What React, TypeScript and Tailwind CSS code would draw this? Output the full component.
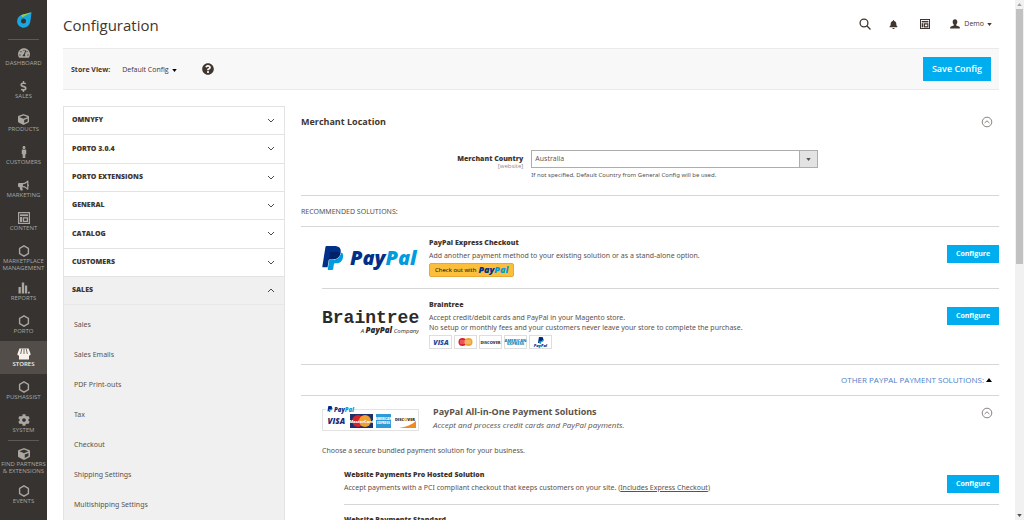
import { ReactNode } from "react";
import { FaBell, FaBullhorn, FaCog, FaCube, FaDollarSign, FaMale, FaQuestionCircle, FaTachometerAlt } from "react-icons/fa";

const HexIcon = () => (
  <svg viewBox="0 0 12 12" className="h-3 w-3" fill="none" stroke="currentColor" strokeWidth="1.4">
    <path d="M6 .9 10.4 3.4v5.2L6 11.1 1.6 8.6V3.4z" />
  </svg>
);

const LayoutIcon = ({ className = "h-3 w-3" }: { className?: string }) => (
  <svg viewBox="0 0 12 12" className={className} fill="none" stroke="currentColor">
    <rect x=".6" y=".6" width="10.8" height="10.8" strokeWidth="1.2" />
    <path d="M2 3.2h8" strokeWidth="1.8" />
    <path d="M3 5v5" strokeWidth="2" />
    <path d="M5.4 5.900h4v3.500h-4z" strokeWidth="1.4" />
  </svg>
);

const BarsIcon = () => (
  <svg viewBox="0 0 12 12" className="h-3 w-3" fill="currentColor">
    <path d="M.5 5h2.3v6.5H.5zM3.8.5h2.4v11H3.8zM7 3.5h2.2v8H7zM10 9.8h1.8v1.7H10z" />
  </svg>
);

const StoreIcon = () => (
  <svg viewBox="0 0 14 12" className="h-3 w-3.5" fill="currentColor">
    <path d="M2.4.5h9.2L13.6 6c0 1-.8 1.600-1.600 1.600V11.500H2V7.600C1.200 7.600.4 7 .4 6z" />
    <path d="M4.700 1 3.700 6M7 1v5M9.300 1l1 5" stroke="#524d49" strokeWidth=".8" />
  </svg>
);

const UserIcon = () => (
  <svg viewBox="0 0 12 12" className="h-2.5 w-2.5" fill="currentColor">
    <path d="M6 .3c1.800 0 2.800 1.200 2.800 3 0 1.500-.6 2.700-1.300 3.400v1l3.400 1.200c.6.2.9.7.9 1.300v1.300H.2v-1.300c0-.6.3-1.100.9-1.300l3.400-1.200v-1C3.800 6 3.200 4.800 3.200 3.300c0-1.800 1-3 2.800-3z" />
  </svg>
);

const Caret = ({ up = false }: { up?: boolean }) => (
  <svg viewBox="0 0 6 4" className={up ? "h-1 w-1.5 rotate-180" : "h-[3px] w-[5px]"} fill="currentColor">
    <path d="M0 0h6L3 4z" />
  </svg>
);

const Chevron = ({ up = false }: { up?: boolean }) => (
  <svg viewBox="0 0 8 5" className={`h-[5px] w-2 ${up ? "rotate-180" : ""}`} fill="none" stroke="currentColor" strokeWidth=".9">
    <path d="M1 1l3 3 3-3" />
  </svg>
);

const CollapseIcon = () => (
  <svg viewBox="0 0 12 12" className="h-3 w-3 text-[#7a746f]" fill="none" stroke="currentColor">
    <circle cx="6" cy="6" r="4.800" strokeWidth=".9" />
    <path d="M3.600 7 6 4.800 8.400 7" strokeWidth=".9" />
  </svg>
);

interface NavItem {
  label: string;
  icon: ReactNode;
  active?: boolean;
  divided?: boolean;
}

const navItems: NavItem[] = [
  { label: "Dashboard", icon: <FaTachometerAlt size={12} /> },
  { label: "Sales", icon: <FaDollarSign size={11} /> },
  { label: "Products", icon: <FaCube size={11} /> },
  { label: "Customers", icon: <FaMale size={12} /> },
  { label: "Marketing", icon: <FaBullhorn size={11} /> },
  { label: "Content", icon: <LayoutIcon /> },
  { label: "Marketplace Management", icon: <HexIcon /> },
  { label: "Reports", icon: <BarsIcon /> },
  { label: "Porto", icon: <HexIcon /> },
  { label: "Stores", icon: <StoreIcon />, active: true },
  { label: "Pushassist", icon: <HexIcon /> },
  { label: "System", icon: <FaCog size={12} /> },
  { label: "Find Partners & Extensions", icon: <FaCube size={12} />, divided: true },
  { label: "Events", icon: <HexIcon /> },
];

const configTabs = ["Omnyfy", "Porto 3.0.4", "Porto Extensions", "General", "Catalog", "Customers"];
const salesPages = ["Sales", "Sales Emails", "PDF Print-outs", "Tax", "Checkout", "Shipping Settings", "Multishipping Settings"];

function Sidebar() {
  return (
    <nav className="w-[47px] shrink-0 bg-[#373330] text-[#aaa6a0]">
      <a href="#" aria-label="Home" className="flex h-[39px] items-center justify-center">
        <svg viewBox="0 0 16 16" className="h-4 w-4">
          <path d="M15.500.3C15 4 15 7.500 14 10.500a6.500 6.500 0 1 1-9-7.200C8.500 1.800 12 1.500 15.500.3z" fill="#1ba6e0" />
          <path d="M15.500.3C12 1.500 8 1.800 4.800 3.400L6.600 5.200C9.500 3.400 12.500 2.500 15.500.3z" fill="#8fd14a" />
          <circle cx="7.500" cy="9" r="2.500" fill="#373330" />
        </svg>
      </a>
      <div className="mx-2 border-t border-[#5d5955]" />
      {navItems.map((item) => (
        <div key={item.label}>
          {item.divided && <div className="mx-2 border-t border-[#5d5955]" />}
          <a
            href="#"
            className={`flex min-h-[33px] flex-col items-center pt-[7px] pb-[3px] ${item.active ? "bg-[#524d49] font-semibold text-[#f7f3eb]" : ""}`}
          >
            <span className="flex h-3 items-center">{item.icon}</span>
            <span className="mt-px text-center text-[6px] leading-[7px] uppercase">{item.label}</span>
          </a>
        </div>
      ))}
    </nav>
  );
}

function Header() {
  return (
    <header className="flex h-12 items-center justify-between pr-[7px]">
      <h1 className="pt-0.5 text-[15px]">Configuration</h1>
      <div className="flex items-center text-[#41362f]">
        <button aria-label="Search" className="mr-[18px]">
          <svg viewBox="0 0 12 12" className="h-3 w-3" fill="none" stroke="currentColor" strokeWidth="1.300">
            <circle cx="5" cy="5" r="3.900" />
            <path d="M7.800 7.800l3.700 3.700" />
          </svg>
        </button>
        <button aria-label="Notifications" className="mr-[22px]">
          <FaBell size={9} />
        </button>
        <button aria-label="Dashboard layout" className="mr-5">
          <LayoutIcon className="h-2.5 w-2.5" />
        </button>
        <button className="flex items-center text-[7px]">
          <UserIcon />
          <span className="mr-[3px] ml-1">Demo</span>
          <Caret />
        </button>
      </div>
    </header>
  );
}

function Toolbar() {
  return (
    <div className="flex h-[42px] items-center border-y border-[#eaeaea] bg-[#f8f8f8] px-2">
      <label htmlFor="store" className="pt-0.5 text-[7px] font-bold">Store View:</label>
      <div className="ml-3 flex items-center pt-0.5">
        <select id="store" className="field-sizing-content appearance-none bg-transparent text-[7px]">
          <option>Default Config</option>
        </select>
        <span className="pointer-events-none ml-[3px] text-black"><Caret /></span>
      </div>
      <button aria-label="Help" className="ml-[25px] text-[#41362f]">
        <FaQuestionCircle size={12} />
      </button>
      <button className="ml-auto h-6 w-[68px] bg-[#00aeef] text-[9px] font-semibold text-white">Save Config</button>
    </div>
  );
}

function ConfigTabs() {
  return (
    <div className="w-[222px] shrink-0 self-start border border-[#e3e3e3]">
      <div className="grid h-[170px] grid-rows-6">
        {configTabs.map((tab) => (
          <button key={tab} className="flex items-center justify-between border-b border-[#e3e3e3] pr-[9px] pl-2 text-[7px] font-extrabold uppercase">
            {tab}
            <Chevron />
          </button>
        ))}
      </div>
      <div className="bg-[#f0f0f0]">
        <button className="flex h-7 w-full items-center justify-between border-b border-[#e8e8e8] pr-[9px] pl-2 text-[7px] font-extrabold uppercase">
          Sales
          <Chevron up />
        </button>
        <ul className="pt-[5px]">
          {salesPages.map((page) => (
            <li key={page}>
              <a href="#" className="flex h-[30px] items-center pl-2.5 font-['Noto_Sans',sans-serif] text-[7px] text-[#5a524c]">{page}</a>
            </li>
          ))}
        </ul>
      </div>
    </div>
  );
}

function ConfigureButton() {
  return <button className="h-[18px] w-[52px] shrink-0 bg-[#00aeef] text-[7px] font-bold text-white">Configure</button>;
}

// The two-tone double "P", drawn in a 24x24 box
const PayPalMark = () => (
  <>
    <path fill="#009cde" d="M21.222 6.917a3.350 3.350 0 0 0-.607-.541c-.93 5-4 7.455-9.179 7.455h-2.190a.563.563 0 0 0-.556.479l-1.433 9.043a.56.56 0 0 0 .554.647h3.882c.46 0 .85-.334.922-.788l.816-5.090a.932.932 0 0 1 .923-.788h.58c3.760 0 6.705-1.528 7.565-5.946.36-1.847.174-3.388-.777-4.471z" />
    <path fill="#003087" d="M7.076 21.337H2.470a.641.641 0 0 1-.633-.74L4.944.901C5.026.382 5.474 0 5.998 0h7.460c2.570 0 4.578.543 5.690 1.810 1.010 1.150 1.304 2.420 1.012 4.287-.98 5.500-4.400 7.234-8.724 7.234h-2.190c-.524 0-.968.382-1.050.9z" />
    <path fill="#012169" d="M9.300 6.800c.1-.5.500-.9 1-.9h6c1.600 0 2.900.2 3.800.7-1 5-4.400 6.750-8.660 6.750h-2.190c-.5 0-.9.350-1.050.9z" />
  </>
);

const PayPalLogo = () => (
  <svg viewBox="0 0 97 26" className="h-[26px] w-[97px]" role="img">
    <g transform="translate(-1.500 1)"><PayPalMark /></g>
    <text x="28" y="20" fontFamily="Open Sans" fontSize="20" fontWeight="800" fontStyle="italic" fill="#003087">
      Pay<tspan fill="#009cde">Pal</tspan>
    </text>
  </svg>
);

const BraintreeLogo = () => (
  <svg viewBox="0 0 97 28" className="h-7 w-[97px]" role="img" fill="#2b2b2b">
    <text x="0" y="16" fontFamily="Liberation Mono" fontSize="18" fontWeight="700">Braintree</text>
    <text x="97" y="26" textAnchor="end" fontFamily="Open Sans" fontStyle="italic" fontSize="6">
      A <tspan fontWeight="800" fontSize="8">PayPal</tspan> Company
    </text>
  </svg>
);

const BraintreeCards = () => (
  <svg viewBox="0 0 124 15" className="h-[15px] w-[124px]" role="img" fontFamily="Open Sans" fontWeight="800" textAnchor="middle">
    {[0, 25, 50, 75, 100].map((x) => (
      <rect key={x} x={x + 0.5} y=".5" width="22" height="13" fill="#fff" stroke="#dedede" />
    ))}
    <text x="12" y="9.500" fontSize="7" fontStyle="italic" fill="#1a4a9c">VISA</text>
    <circle cx="33.500" cy="7" r="4" fill="#d9222a" />
    <circle cx="39.500" cy="7" r="4" fill="#f0a02c" />
    <path d="M31 6h11M31 8h11" stroke="#fff" strokeWidth=".5" />
    <text x="61.500" y="8.500" fontSize="4" fill="#3c3c3c">DISCOVER</text>
    <text x="86.500" y="6.500" fontSize="4" fill="#1485b8">AMERICAN</text>
    <text x="86.500" y="10" fontSize="4" fill="#1485b8">EXPRESS</text>
    <g transform="translate(108.500 2) scale(.28)"><PayPalMark /></g>
    <text x="111.500" y="12" fontSize="4" fontStyle="italic" fill="#003087">PayPal</text>
  </svg>
);

const AllInOneLogo = () => (
  <svg viewBox="0 0 97 26" className="h-[26px] w-[97px]" role="img" fontFamily="Open Sans" fontWeight="800">
    <rect x=".5" y="4.500" width="96" height="21" fill="#fff" stroke="#e2e2e2" />
    <rect x="4" y="0" width="28" height="8" fill="#fff" />
    <g transform="translate(5 1) scale(.25)"><PayPalMark /></g>
    <text x="12" y="6.500" fontSize="6" fontStyle="italic" fill="#003087">Pay<tspan fill="#009cde">Pal</tspan></text>
    <text x="5.500" y="19" fontSize="8" fontStyle="italic" fill="#1a2a70">VISA</text>
    <rect x="28" y="9" width="23" height="14" fill="#1d2f6f" />
    <circle cx="36" cy="16" r="6" fill="#d9222a" />
    <circle cx="43" cy="16" r="6" fill="#f0a02c" />
    <text x="39.500" y="17.500" fontSize="4" textAnchor="middle" fill="#fff">MasterCard</text>
    <rect x="54" y="9" width="15" height="14" fill="#2f9bd6" />
    <text x="61.500" y="15" fontSize="3" textAnchor="middle" fill="#fff">AMERICAN</text>
    <text x="61.500" y="19" fontSize="3" textAnchor="middle" fill="#fff">EXPRESS</text>
    <path d="M94 16v7H77c7-1 13-3.500 17-7z" fill="#f08a24" />
    <text x="83" y="15.500" fontSize="4" textAnchor="middle" fill="#2b2b2b">DISC<tspan fill="#f08a24">O</tspan>VER</text>
  </svg>
);

interface SolutionProps {
  logo: ReactNode;
  title: string;
  children: ReactNode;
}

function Solution({ logo, title, children }: SolutionProps) {
  return (
    <div className="flex items-start">
      <div className="mr-2.5 pt-[7px]">{logo}</div>
      <div className="flex-1 font-['Noto_Sans',sans-serif] leading-[10px]">
        <h3 className="mb-[3px] font-['Open_Sans',sans-serif] font-extrabold text-[#41362f]">{title}</h3>
        {children}
      </div>
      <div className="pt-[7px]"><ConfigureButton /></div>
    </div>
  );
}

function PaymentSettings() {
  return (
    <section className="min-w-0 flex-1 text-[7px] text-[#5a524c]">
      <div className="flex h-8 items-center justify-between pr-1.5">
        <h2 className="text-[9px] font-bold text-[#41362f]">Merchant Location</h2>
        <button aria-label="Collapse merchant location"><CollapseIcon /></button>
      </div>

      <div className="flex h-[58px] items-start border-b border-[#d6d6d6] pt-3">
        <label htmlFor="country" className="w-[33%] shrink-0 pt-1 pr-2 text-right leading-[9px] font-extrabold text-[#41362f]">
          Merchant Country
          <span className="block text-[6px] leading-[7px] font-normal text-[#8a8a8a]">[website]</span>
        </label>
        <div className="w-[41%]">
          <div className="relative">
            <select id="country" className="block h-[18px] w-full appearance-none border border-[#adadad] bg-white pl-[3px]">
              <option>Australia</option>
            </select>
            <span className="pointer-events-none absolute inset-y-0 right-0 flex w-[19px] items-center justify-center border border-[#adadad] bg-[#e3e3e3]">
              <Caret />
            </span>
          </div>
          <p className="pt-0.5 font-['Noto_Sans',sans-serif] text-[6px] leading-[10px]">If not specified, Default Country from General Config will be used.</p>
        </div>
      </div>

      <div className="flex h-[31px] items-center border-b border-[#d6d6d6] pt-0.5 font-['Noto_Sans',sans-serif] uppercase">Recommended Solutions:</div>

      <div className="pl-[21px]">
        <div className="h-[62px] border-b border-[#d6d6d6] pt-[11px]">
          <Solution logo={<PayPalLogo />} title="PayPal Express Checkout">
            <p>Add another payment method to your existing solution or as a stand-alone option.</p>
            <button className="mt-0.5 flex h-3.5 items-center rounded-xs border border-[#e8a838] bg-[#fdbf3b] px-[5px] font-['Open_Sans',sans-serif]">
              <span className="mr-0.5 text-[6px] text-black">Check out with</span>
              <span className="text-[9px] font-extrabold text-[#003087] italic">Pay<span className="text-[#009cde]">Pal</span></span>
            </button>
          </Solution>
        </div>
        <div className="h-[75px] pt-[11px]">
          <Solution logo={<BraintreeLogo />} title="Braintree">
            <p>Accept credit/debit cards and PayPal in your Magento store.</p>
            <p>No setup or monthly fees and your customers never leave your store to complete the purchase.</p>
            <div className="mt-0.5"><BraintreeCards /></div>
          </Solution>
        </div>
      </div>

      <div className="flex h-8 items-center justify-end border-y border-[#d6d6d6] pr-[7px]">
        <a href="#" className="flex items-center text-[8px] text-[#4a7fc9] uppercase">
          Other PayPal Payment Solutions:
          <span className="ml-0.5 text-black"><Caret up /></span>
        </a>
      </div>

      <div className="pl-[21px]">
        <div className="flex items-start pt-[9px] pr-1.5">
          <AllInOneLogo />
          <div className="ml-3.5 flex-1">
            <h2 className="text-[9px] leading-3.5 font-bold">PayPal All-in-One Payment Solutions</h2>
            <p className="text-[8px] leading-3 italic">Accept and process credit cards and PayPal payments.</p>
          </div>
          <button aria-label="Collapse all-in-one solutions" className="pt-0.5"><CollapseIcon /></button>
        </div>
        <p className="mt-[15px] font-['Noto_Sans',sans-serif] leading-[10px]">Choose a secure bundled payment solution for your business.</p>

        <div className="pt-3.5 pl-[22px] leading-[10px]">
          <div className="flex h-[35px] items-start border-b border-[#d6d6d6]">
            <div className="flex-1">
              <h3 className="mb-[3px] font-extrabold text-[#41362f]">Website Payments Pro Hosted Solution</h3>
              <p className="font-['Noto_Sans',sans-serif]">
                Accept payments with a PCI compliant checkout that keeps customers on your site. (
                <a href="#" className="underline">Includes Express Checkout</a>)
              </p>
            </div>
            <div className="pt-[5px]"><ConfigureButton /></div>
          </div>
          <h3 className="pt-2.5 font-extrabold text-[#41362f]">Website Payments Standard</h3>
        </div>
      </div>
    </section>
  );
}

function ScrollBar() {
  return (
    <div className="flex w-[9px] shrink-0 flex-col items-center bg-[#f1f1f1] text-[#505050]">
      <span className="flex h-[9px] items-center text-[#a3a3a3]"><span className="rotate-180"><Caret /></span></span>
      <div className="h-[49%] w-[7px] bg-[#c1c1c1]" />
      <span className="mt-auto flex h-[9px] items-center"><Caret /></span>
    </div>
  );
}

export default function App() {
  return (
    <div className="flex h-screen overflow-hidden bg-white font-['Open_Sans',sans-serif] text-[#41362f]">
      <Sidebar />
      <main className="min-w-0 flex-1 px-4">
        <Header />
        <Toolbar />
        <div className="flex gap-4 pt-4">
          <ConfigTabs />
          <PaymentSettings />
        </div>
      </main>
      <ScrollBar />
    </div>
  );
}
